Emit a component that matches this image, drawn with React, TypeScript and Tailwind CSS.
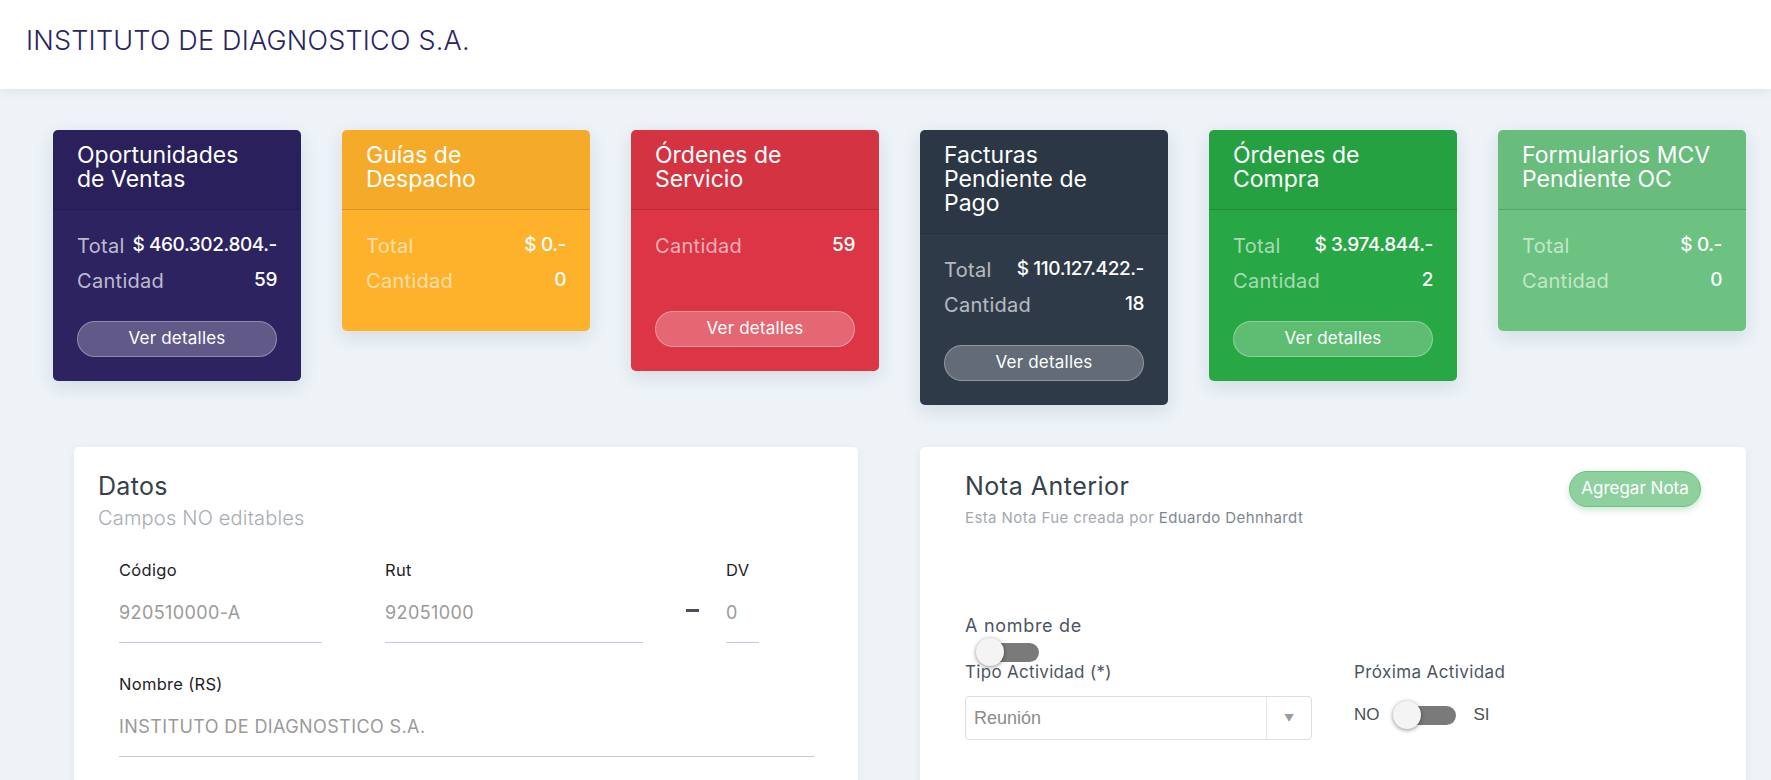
import React from "react";

type Row = { label: string; value: string };

type CardProps = {
  title: string[];
  rows: Row[];
  bg: string;
  button?: boolean;
  labelColor: string;
  oneRow?: boolean;
};

function StatCard({ title, rows, bg, button, labelColor, oneRow }: CardProps) {
  return (
    <div className={`w-[248px] shrink-0 rounded-[5px] overflow-hidden shadow-[0_6px_18px_rgba(30,60,90,0.12)] ${bg}`}>
      {/* header */}
      <div className="bg-black/[0.035] border-b border-black/[0.13] px-6 pt-[13px] pb-[18px]">
        <h3 className="text-[23px] leading-[24px] text-white font-normal">
          {title.map((t, i) => (
            <span key={i} className="block whitespace-nowrap">
              {t}
            </span>
          ))}
        </h3>
      </div>

      {/* body */}
      <div className={`px-6 pt-[18px] ${button ? "pb-6" : "pb-[33px]"}`}>
        {rows.map((r) => (
          <div key={r.label} className="h-[35px] flex items-center justify-between gap-1.5">
            <span className={`text-[20px] tracking-[0.3px] ${labelColor}`}>{r.label}</span>
            <span className="text-[19px] tracking-[-0.4px] text-white font-medium whitespace-nowrap">{r.value}</span>
          </div>
        ))}
        {button && (
          <button
            className={`w-full h-9 rounded-full bg-white/25 border border-white/30 text-white text-[17px] tracking-[0.2px] ${
              oneRow ? "mt-[48px]" : "mt-[23px]"
            }`}
          >
            Ver detalles
          </button>
        )}
      </div>
    </div>
  );
}

function Toggle() {
  return (
    <div className="relative w-[63px] h-[28px]">
      <div className="absolute right-0 top-[5px] h-[19px] w-[49px] rounded-full bg-[#7a7a7a]" />
      <div className="absolute left-0 top-0 size-[28px] rounded-full bg-[#f4f4f4] shadow-[0_1px_4px_rgba(0,0,0,0.45)]" />
    </div>
  );
}

function Field({ label, value, width }: { label: string; value: string; width: string }) {
  return (
    <div className={width}>
      <div className="h-5 leading-5 text-[16.5px] tracking-[0.3px] text-[#1f2328]">{label}</div>
      <div className="mt-[14px] h-[49px] pt-[7px] leading-6 text-[18px] text-[#9a9a9a] border-b border-[#c9c7de] tracking-[0.4px] whitespace-nowrap">
        {value}
      </div>
    </div>
  );
}

export default function App() {
  return (
    <div className="min-h-screen bg-[#edf3f7] font-['Inter',sans-serif] overflow-hidden">
      {/* top bar */}
      <header className="h-[89px] bg-white shadow-[0_3px_10px_rgba(40,60,90,0.07)] flex items-center pl-[26px] pb-2 relative z-10">
        <h1 className="text-[27px] leading-none text-[#2a2562] font-light tracking-[0.2px]">
          INSTITUTO DE DIAGNOSTICO S.A.
        </h1>
      </header>

      {/* summary cards */}
      <div className="flex items-start gap-[41px] pl-[53px] pt-[41px]">
        <StatCard
          title={["Oportunidades", "de Ventas"]}
          bg="bg-[#2c2360]"
          labelColor="text-white/70"
          button
          rows={[
            { label: "Total", value: "$ 460.302.804.-" },
            { label: "Cantidad", value: "59" },
          ]}
        />
        <StatCard
          title={["Guías de", "Despacho"]}
          bg="bg-[#feb22b]"
          labelColor="text-white/60"
          rows={[
            { label: "Total", value: "$ 0.-" },
            { label: "Cantidad", value: "0" },
          ]}
        />
        <StatCard
          title={["Órdenes de", "Servicio"]}
          bg="bg-[#dc3545]"
          labelColor="text-white/60"
          button
          oneRow
          rows={[{ label: "Cantidad", value: "59" }]}
        />
        <StatCard
          title={["Facturas", "Pendiente de", "Pago"]}
          bg="bg-[#2e3a48]"
          labelColor="text-white/65"
          button
          rows={[
            { label: "Total", value: "$ 110.127.422.-" },
            { label: "Cantidad", value: "18" },
          ]}
        />
        <StatCard
          title={["Órdenes de", "Compra"]}
          bg="bg-[#28a745]"
          labelColor="text-white/60"
          button
          rows={[
            { label: "Total", value: "$ 3.974.844.-" },
            { label: "Cantidad", value: "2" },
          ]}
        />
        <StatCard
          title={["Formularios MCV", "Pendiente OC"]}
          bg="bg-[#6cc381]"
          labelColor="text-white/60"
          rows={[
            { label: "Total", value: "$ 0.-" },
            { label: "Cantidad", value: "0" },
          ]}
        />
      </div>

      {/* detail panels */}
      <div className="flex items-start gap-[62px] pl-[74px] pt-[42px]">
        {/* Datos */}
        <div className="w-[784px] h-[400px] shrink-0 bg-white rounded-[5px] shadow-[0_2px_10px_rgba(40,60,90,0.06)] px-6 pt-6">
          <h2 className="text-[25px] leading-[30px] tracking-[0.3px] text-[#36414c]">Datos</h2>
          <p className="mt-[5px] text-[20px] leading-6 tracking-[0.2px] text-[#a7adb5] font-light">Campos NO editables</p>

          <div className="pl-[21px] pr-5 mt-[30px]">
            <div className="flex items-start">
              <Field label="Código" value="920510000-A" width="w-[203px]" />
              <div className="w-[63px]" />
              <Field label="Rut" value="92051000" width="w-[258px]" />
              <div className="w-[43px]" />
              <div className="w-[13px] h-[3px] bg-[#4a4f56] mt-[49px]" />
              <div className="w-[27px]" />
              <Field label="DV" value="0" width="w-[33px]" />
            </div>

            <div className="mt-[31px]">
              <Field label="Nombre (RS)" value="INSTITUTO DE DIAGNOSTICO S.A." width="w-full" />
            </div>
          </div>
        </div>

        {/* Nota Anterior */}
        <div className="w-[826px] h-[400px] shrink-0 bg-white rounded-[5px] shadow-[0_2px_10px_rgba(40,60,90,0.06)] pl-[45px] pr-[45px] pt-6">
          <div className="flex items-start justify-between">
            <div>
              <h2 className="text-[25px] leading-[30px] tracking-[0.5px] text-[#36414c]">Nota Anterior</h2>
              <p className="mt-[7px] text-[15px] leading-5 tracking-[0.4px] text-[#a3a9b1]">
                Esta Nota Fue creada por <span className="text-[#7d8794]">Eduardo Dehnhardt</span>
              </p>
            </div>
            <button className="w-[132px] h-9 rounded-full bg-[#8fd19e] border border-[#6cc381] text-white text-[17px] shadow-[0_3px_6px_rgba(40,167,69,0.25)]">
              Agregar Nota
            </button>
          </div>

          <div className="mt-[87px] text-[18px] leading-[22px] tracking-[0.7px] text-[#4c5663]">A nombre de</div>
          <div className="mt-[1px] ml-[11px] h-[23px]">
            <Toggle />
          </div>

          <div className="flex items-start gap-[42px]">
            <div className="w-[347px]">
              <div className="text-[17px] leading-[22px] tracking-[0.3px] text-[#4c5663]">Tipo Actividad (*)</div>
              <div className="mt-[13px] h-[44px] flex items-stretch border border-[#dedede] rounded-[4px]">
                <div className="flex-1 flex items-center pl-2 font-['Liberation_Sans',sans-serif] text-[18px] text-[#8c8c8c]">
                  Reunión
                </div>
                <div className="w-[45px] border-l border-[#e6e6e6] flex items-center justify-center text-[10px] text-[#9a9a9a]">
                  ▼
                </div>
              </div>
            </div>
            <div>
              <div className="text-[17px] leading-[22px] tracking-[0.4px] text-[#4c5663]">Próxima Actividad</div>
              <div className="mt-[18px] flex items-center font-['Liberation_Sans',sans-serif] text-[17px] text-[#4a4f56]">
                <span>NO</span>
                <div className="ml-[13px] mr-[18px]">
                  <Toggle />
                </div>
                <span>SI</span>
              </div>
            </div>
          </div>
        </div>
      </div>
    </div>
  );
}
